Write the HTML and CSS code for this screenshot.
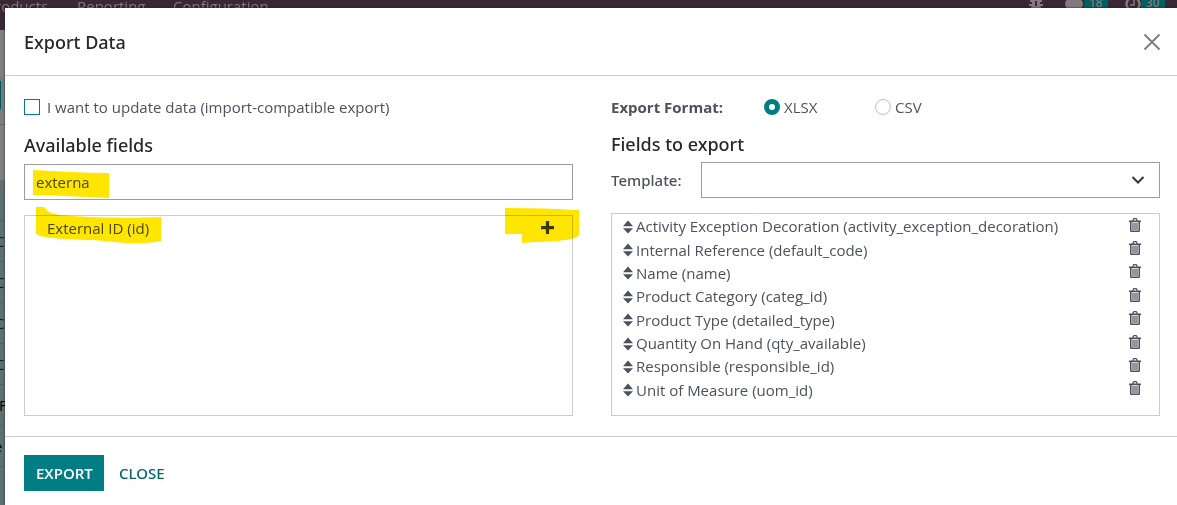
FILE: index.html
```html
<!DOCTYPE html>
<html lang="en">
<head>
<meta charset="utf-8">
<title>Export Data</title>
<link rel="stylesheet" href="styles.css">
</head>
<body>
<svg class="sprite" aria-hidden="true">
  <symbol id="sort" viewBox="0 0 10 14"><path d="M0 6.200 5 0.600 10 6.200zM0 8.200 5 13.400 10 8.200z"/></symbol>
  <symbol id="trash" viewBox="0 0 12 14"><path fill-rule="evenodd" d="M0 2.400h3.200L4 .4Q4.200 0 4.800 0H7.200Q7.800 0 8 .4L8.800 2.400H12V4H11V12.500Q11 14 9.800 14H2.200Q1 14 1 12.500V4H0zM4.500 2.400h3L7 1.200H5zM2.500 4.200V12.500h7V4.200z"/><path d="M3.400 5h1.200v7h-1.200zM5.400 5h1.200v7h-1.200zM7.400 5h1.200v7h-1.200z"/></symbol>
</svg>
<div class="page" aria-hidden="true">
  <div class="navbar">
    <span class="menu menu-products">Products</span>
    <span class="menu menu-reporting">Reporting</span>
    <span class="menu menu-config">Configuration</span>
    <svg class="tray bug" viewBox="0 0 16 16"><path fill="currentColor" fill-rule="evenodd" d="M4 0h8v4h2v2h-2v2h3v2h-3l2 3h-3l-1-1H6l-1 1H2l2-3H1V8h3V6H2V4h2zM7 5v5h2V5z"/></svg>
    <svg class="tray bubble" viewBox="0 0 18 16"><ellipse fill="currentColor" cx="9" cy="8" rx="9" ry="7"/></svg>
    <span class="badge badge-messages">18</span>
    <svg class="tray clock" viewBox="0 0 16 16"><circle cx="8" cy="8" r="6.500" fill="none" stroke="currentColor" stroke-width="2.400"/><path d="M9 3v6H5" fill="none" stroke="currentColor" stroke-width="1.500"/></svg>
    <span class="badge badge-activities">30</span>
  </div>
  <div class="control"></div>
  <div class="control selected"></div>
  <div class="control search"></div>
  <div class="control rest"></div>
  <div class="records">
    <div class="record"></div>
    <div class="record"><span>C</span></div>
    <div class="record"><span>C</span></div>
    <div class="record"><span>C</span></div>
    <div class="record"><span>C</span></div>
    <div class="record"><b>F</b></div>
    <div class="record"><i>e</i></div>
    <div class="record"></div>
  </div>
</div>

<main class="dialog" role="dialog" aria-labelledby="title">
  <header class="dialog-header">
    <h1 class="title" id="title">Export Data</h1>
    <button class="close" type="button" aria-label="Close dialog"><svg viewBox="0 0 18 18"><path d="M1.500 1.500l15 15M16.500 1.500l-15 15"/></svg></button>
  </header>

  <div class="dialog-body">
    <section class="column">
      <div class="option-row">
        <input class="check" type="checkbox" id="compat">
        <label for="compat">I want to update data (import-compatible export)</label>
      </div>
      <h2 class="heading" id="available">Available fields</h2>
      <div class="search-box">
        <input class="text-input" type="text" value="externa" aria-labelledby="available">
        <svg class="mark mark-search" viewBox="0 0 77 30"><path d="M1 1C25 2 50 4 77 4V29C50 28 25 26 1 26z"/></svg>
      </div>
      <div class="panel available">
        <div class="available-row">
          <span>External ID (id)</span>
          <button class="add" type="button" aria-label="Add External ID"><svg viewBox="0 0 12 12"><path d="M4.500 0h3v4.500H12v3H7.500V12h-3V7.500H0v-3h4.500z"/></svg></button>
        </div>
        <svg class="mark mark-field" viewBox="0 0 126 38"><path d="M0 1H8C12 8 22 9 36 10C60 12 78 11 90 12L125 11V35C110 38 92 38 70 35C45 33 10 34 0 28z"/></svg>
        <svg class="mark mark-add" viewBox="0 0 75 36"><path d="M0 0Q38 0 74 2V27C69 34 40 33 17 35V26H0z"/></svg>
      </div>
    </section>

    <section class="column">
      <div class="format-row" role="radiogroup" aria-labelledby="format">
        <strong class="format-label" id="format">Export Format:</strong>
        <span class="choice"><input class="radio" type="radio" name="format" id="xlsx" checked><label for="xlsx">XLSX</label></span>
        <span class="choice"><input class="radio" type="radio" name="format" id="csv"><label for="csv">CSV</label></span>
      </div>
      <h2 class="heading">Fields to export</h2>
      <div class="template-row">
        <label class="template-label" for="template">Template:</label>
        <div class="select-box">
          <select class="select" id="template"><option></option></select>
          <svg class="chevron" viewBox="0 0 14 8"><path d="M1.500 1 7 6.500 12.500 1"/></svg>
        </div>
      </div>
      <ul class="panel fields">
        <li class="field"><svg class="sort"><use href="#sort"/></svg><span class="name">Activity Exception Decoration (activity_exception_decoration)</span><button class="remove" type="button" aria-label="Remove"><svg><use href="#trash"/></svg></button></li>
        <li class="field"><svg class="sort"><use href="#sort"/></svg><span class="name">Internal Reference (default_code)</span><button class="remove" type="button" aria-label="Remove"><svg><use href="#trash"/></svg></button></li>
        <li class="field"><svg class="sort"><use href="#sort"/></svg><span class="name">Name (name)</span><button class="remove" type="button" aria-label="Remove"><svg><use href="#trash"/></svg></button></li>
        <li class="field"><svg class="sort"><use href="#sort"/></svg><span class="name">Product Category (categ_id)</span><button class="remove" type="button" aria-label="Remove"><svg><use href="#trash"/></svg></button></li>
        <li class="field"><svg class="sort"><use href="#sort"/></svg><span class="name">Product Type (detailed_type)</span><button class="remove" type="button" aria-label="Remove"><svg><use href="#trash"/></svg></button></li>
        <li class="field"><svg class="sort"><use href="#sort"/></svg><span class="name">Quantity On Hand (qty_available)</span><button class="remove" type="button" aria-label="Remove"><svg><use href="#trash"/></svg></button></li>
        <li class="field"><svg class="sort"><use href="#sort"/></svg><span class="name">Responsible (responsible_id)</span><button class="remove" type="button" aria-label="Remove"><svg><use href="#trash"/></svg></button></li>
        <li class="field"><svg class="sort"><use href="#sort"/></svg><span class="name">Unit of Measure (uom_id)</span><button class="remove" type="button" aria-label="Remove"><svg><use href="#trash"/></svg></button></li>
      </ul>
    </section>
  </div>

  <footer class="dialog-footer">
    <button class="btn btn-primary" type="button">EXPORT</button>
    <button class="btn btn-link" type="button">CLOSE</button>
  </footer>
</main>
</body>
</html>
```
FILE: styles.css
```css
* { box-sizing: border-box; }
body {
  margin: 0;
  min-height: 100vh;
  padding: 8px 0 0 5px;
  display: flex;
  overflow: hidden;
  background: #808080;
  color: #4c515c;
  font: 15px/23px "Segoe UI", "Open Sans", sans-serif;
}
button, input, select { font: inherit; color: inherit; border-radius: 0; }
button { padding: 0; border: 0; background: none; cursor: pointer; }
svg { display: block; }
.sprite { position: absolute; width: 0; height: 0; }

/* Dimmed page behind the dialog */
.page { position: absolute; inset: 0; overflow: hidden; }
.navbar { position: relative; height: 30px; background: #392733; color: #85797f; line-height: 20px; }
.menu, .tray, .badge { position: absolute; top: -4px; }
.menu-products { left: -14px; }
.menu-reporting { left: 77px; }
.menu-config { left: 173px; }
.tray { width: 16px; height: 16px; }
.bug { left: 1028px; }
.bubble { left: 1065px; width: 18px; }
.clock { left: 1125px; }
.badge { height: 16px; padding: 0 5px; background: #005f61; font-size: 12px; font-weight: 600; line-height: 13px; }
.badge-messages { left: 1084px; }
.badge-activities { left: 1141px; }
.control { height: 47px; background: #7f7f7f; }
.control.selected { height: 36px; background: #6e7e7f; border: solid #6e7e7f; border-width: 4px 0; box-shadow: inset 1px 0 #00595c; }
.control.search { height: 12px; border-bottom: 1px solid #666; }
.control.rest { height: 55px; }
.records { background: #5f7071; }
.record { height: 41px; border-bottom: 1px solid #526162; color: #000; line-height: 41px; }
.record span { margin-left: -5px; color: #101820; }
.record b { margin-left: -1px; font-weight: 400; }
.record i { margin-left: -6px; color: #000050; font-style: normal; }

.dialog {
  position: relative;
  flex: 1;
  min-width: 0;
  display: flex;
  flex-direction: column;
  background: #fff;
  box-shadow: 0 0 2px #222;
}
.dialog-header {
  height: 68px;
  padding: 0 16px 0 19px;
  display: flex;
  align-items: center;
  justify-content: space-between;
  border-bottom: 1px solid #c9ccd2;
}
.title, .heading, .template-label, .btn-link { font-family: "Segoe UI", "Noto Sans", sans-serif; font-weight: 500; }
.title, .heading { margin: 0; color: #25292e; font-size: 18px; line-height: 24px; }
.close svg { width: 18px; height: 18px; fill: none; stroke: #808080; stroke-width: 2; }

.dialog-body {
  padding: 20px 17px 20px 19px;
  display: grid;
  grid-template-columns: 1fr 1fr;
  gap: 38px;
}
.column { display: flex; flex-direction: column; }
.option-row, .format-row { display: flex; align-items: center; height: 23px; }
.heading { margin: 14px 0 7px; }
.check { appearance: none; width: 16px; height: 16px; margin: 0 7px 2px 0; border: 1px solid #017e84; background: #fff; }
.check:checked { background: #017e84; }

.search-box, .available { position: relative; }
.text-input {
  display: block;
  width: 100%;
  height: 36px;
  padding: 0 11px;
  border: 1px solid #999ba6;
  background: #fff;
  outline: 0;
}
.panel { border: 1px solid #c9ccd2; }
.available { flex: 1; margin-top: 15px; }
.available-row { padding: 0 18px 0 22px; display: flex; align-items: center; justify-content: space-between; height: 24px; }
.add svg { width: 13px; height: 13px; margin-bottom: 2px; fill: #3c404a; }

/* Highlighter strokes drawn over the fields */
.mark { position: absolute; fill: #ffe600; mix-blend-mode: multiply; pointer-events: none; }
.mark-search { left: 8px; top: 5px; width: 77px; height: 30px; }
.mark-field { left: 11px; top: -10px; width: 126px; height: 38px; }
.mark-add { right: -8px; top: -8px; width: 75px; height: 36px; }

.format-label { width: 153px; font-weight: 700; }
.choice { width: 111px; display: flex; align-items: center; gap: 4px; }
.radio { appearance: none; width: 16px; height: 16px; margin: 0 0 2px; border: 1px solid #c0c0c0; border-radius: 50%; background: #fff; }
.radio:checked { border: 5px solid #017e84; }
.format-row + .heading { margin: 13px 0 6px; }

.template-row { display: flex; align-items: center; }
.template-label { width: 90px; }
.select-box { position: relative; flex: 1; }
.select { appearance: none; display: block; width: 100%; height: 36px; padding: 0 36px 0 11px; border: 1px solid #999ba6; background: #fff; }
.chevron { position: absolute; right: 15px; top: 14px; width: 14px; height: 8px; fill: none; stroke: #30343b; stroke-width: 2; pointer-events: none; }

.fields { height: 203px; margin: 15px 0 0; padding: 1px 18px 13px 11px; display: grid; grid-auto-rows: 1fr; list-style: none; }
.field { display: flex; align-items: center; min-height: 0; }
.sort { width: 10px; height: 14px; margin-right: 3px; fill: #4c515c; }
.name { flex: 1; }
.remove svg { width: 12px; height: 14px; fill: #4c515c; }
.remove { margin-bottom: 4px; }

.dialog-footer { flex: 1; padding: 18px 19px 14px; display: flex; align-items: flex-start; border-top: 1px solid #c9ccd2; }
.btn { height: 36px; padding: 0 12px; }
.btn-primary { width: 80px; margin-right: 3px; background: #017e84; color: #fff; font-weight: 600; }
.btn-link { color: #01666b; }
```
